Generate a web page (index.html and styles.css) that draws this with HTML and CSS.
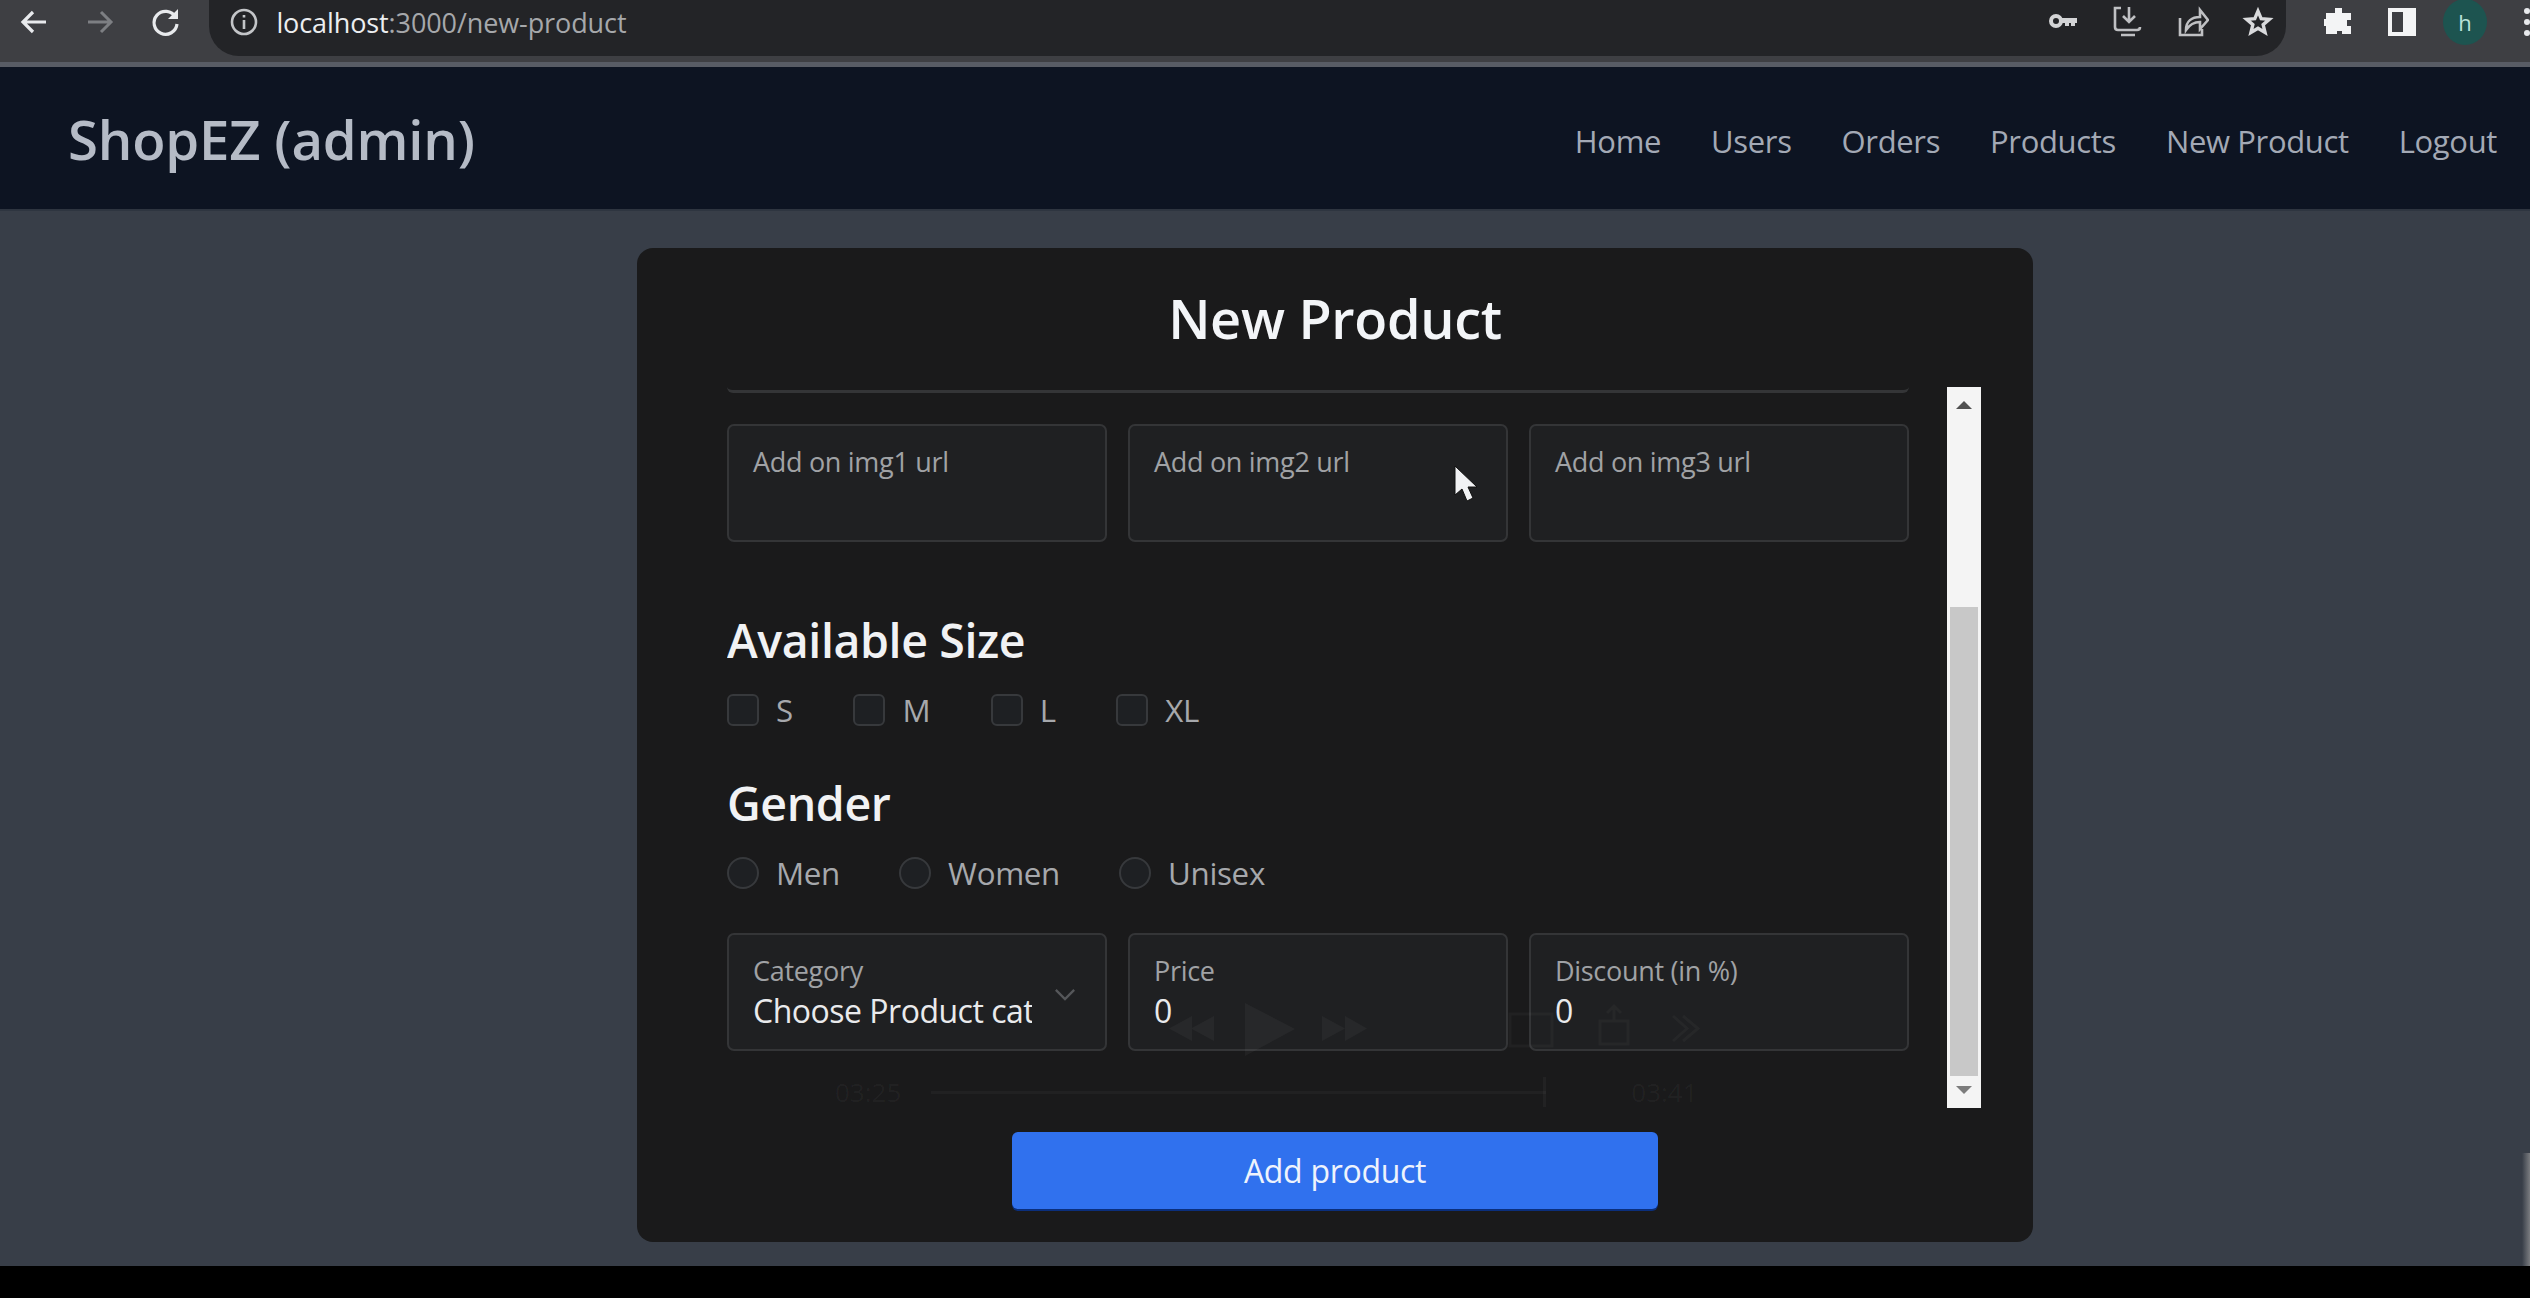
FILE: index.html
```html
<!DOCTYPE html>
<html lang="en">
<head>
<meta charset="utf-8">
<title>ShopEZ (admin)</title>
<link rel="stylesheet" href="styles.css">
</head>
<body>
<div class="screen">
  <header class="browser">
    <div class="browser-nav">
      <svg class="ico" viewBox="0 0 32 32"><path class="s-bright" d="M28 16H6M15 6 5 16l10 10"/></svg>
      <svg class="ico" viewBox="0 0 32 32"><path class="s-dim" d="M4 16h22M17 6l10 10-10 10"/></svg>
      <svg class="ico" viewBox="0 0 32 32"><path class="s-bright" d="M25.5 11A11.500 11.500 0 1 0 27 18"/><path class="f-bright" d="M18 13 28 13 28 3z"/></svg>
    </div>
    <div class="omnibox">
      <svg class="ico" viewBox="0 0 32 32"><circle class="s-thin" cx="16" cy="16" r="12"/><path class="s-thin" d="M16 14v9M16 9v2.500"/></svg>
      <div class="url"><span class="url-host">localhost</span>:3000/new-product</div>
      <div class="omni-actions">
        <svg class="ico" viewBox="0 0 32 32"><circle class="s-key" cx="9" cy="15" r="5"/><path class="f-mid" d="M14 12h16v5h-2v3h-4v-3h-2v3h-4v-3h-4z"/></svg>
        <svg class="ico" viewBox="0 0 32 32"><path class="s-mid" d="M9 2H3v19q0 3 3 3M17 1v13M11 10l6 6 6-6M6 24h19q3 0 3-3M9 29h14"/></svg>
        <svg class="ico" viewBox="0 0 32 32"><path class="s-mid" d="M3 12v17h22v-6M9 24c0-9 6-13 14-13V4l8 10-8 9v-7c-6 0-10 2-14 8z"/></svg>
        <svg class="ico" viewBox="-3 -3 38 38"><path class="s-star" d="m16 3 3.800 9 9.700.8-7.400 6.300 2.300 9.400L16 23.500l-8.400 5 2.300-9.400-7.400-6.300 9.700-.8z"/></svg>
      </div>
    </div>
    <div class="browser-ext">
      <svg class="ico" viewBox="0 0 32 32"><path class="f-white" d="M12 2h7v5h9v7h-4v6h4v8h-9v-3h-5v3H3v-8H1v-7h2V7h9z"/></svg>
      <svg class="ico" viewBox="0 0 32 32"><path class="f-white" fill-rule="evenodd" d="M2 2h28v28H2zM6 6v20h11V6z"/></svg>
      <div class="avatar">h</div>
      <div class="kebab"><i></i><i></i><i></i></div>
    </div>
  </header>

  <nav class="topnav">
    <div class="brand">ShopEZ (admin)</div>
    <ul class="links">
      <li>Home</li><li>Users</li><li>Orders</li><li>Products</li><li>New Product</li><li>Logout</li>
    </ul>
  </nav>

  <main class="page">
    <section class="card">
      <h1 class="card-title">New Product</h1>
      <div class="scroller">
        <form class="form">
          <div class="clipped-field"></div>
          <div class="row row-first">
            <div class="field"><span class="hint">Add on img1 url</span></div>
            <div class="field"><span class="hint">Add on img2 url</span></div>
            <div class="field"><span class="hint">Add on img3 url</span></div>
          </div>
          <h2 class="group-title group-size">Available Size</h2>
          <div class="options options-size">
            <label class="opt"><span class="box"></span>S</label>
            <label class="opt"><span class="box"></span>M</label>
            <label class="opt"><span class="box"></span>L</label>
            <label class="opt"><span class="box"></span>XL</label>
          </div>
          <h2 class="group-title group-gender">Gender</h2>
          <div class="options options-gender">
            <label class="opt"><span class="box round"></span>Men</label>
            <label class="opt"><span class="box round"></span>Women</label>
            <label class="opt"><span class="box round"></span>Unisex</label>
          </div>
          <div class="row row-last">
            <div class="field field-select">
              <span class="hint">Category</span>
              <span class="value value-clip">Choose Product category</span>
              <svg class="chev" viewBox="0 0 24 14"><path d="m2 2 10 10L22 2"/></svg>
            </div>
            <div class="field"><span class="hint">Price</span><span class="value">0</span></div>
            <div class="field"><span class="hint">Discount (in %)</span><span class="value">0</span></div>
          </div>
        </form>
        <div class="scrollbar">
          <svg class="arrow" viewBox="0 0 16 8"><path d="M8 0 16 8H0z"/></svg>
          <div class="track"><div class="thumb"></div></div>
          <svg class="arrow arrow-down" viewBox="0 0 16 8"><path d="M0 0h16L8 8z"/></svg>
        </div>
      </div>
      <button class="submit" type="button">Add product</button>

      <svg class="ghost-controls" viewBox="0 0 560 60">
        <path d="M32 15 9 27.500 32 40zM54 15 31 27.500 54 40z"/>
        <path d="M85 2 135 28 85 55z"/>
        <path d="M162 15l23 12.500L162 40zM185 15l22 12.500L185 40z"/>
        <path class="ghost-line" d="M350 13h42v32h-42zM440 20h28v23h-28zM454 20V6M447 12l7-7 7 7M513 15l14 12.500-14 12.500M523 15l15 12.500-15 12.500"/>
      </svg>
      <div class="ghost-time">
        <span>03:25</span><span class="ghost-bar"></span><span>03:41</span>
      </div>
    </section>
  </main>
  <div class="edge-shadow"></div>
  <div class="cursor">
    <svg viewBox="0 0 26 38"><path d="M2 1v29l7-6 5 12 6-3-5-11h9z"/></svg>
  </div>
  <div class="letterbox"></div>
</div>
</body>
</html>
```

FILE: styles.css
```css
* { box-sizing: border-box; }
html, body { margin: 0; height: 100%; background: #000; }
body { font-family: "Open Sans", "Noto Sans", sans-serif; overflow: hidden; }
.screen { position: relative; display: flex; flex-direction: column; height: 1298px; width: 2530px; overflow: hidden; }

/* Browser chrome */
.browser { display: flex; height: 67px; flex: none; background: #3e3f43; border-bottom: 5px solid #585c65; }
.ico { width: 32px; height: 32px; flex: none; fill: none; }
.s-bright { stroke: #e8eaed; stroke-width: 3.2; fill: none; }
.s-dim { stroke: #7d7f83; stroke-width: 3; fill: none; }
.f-bright { fill: #e8eaed; }
.s-thin { stroke: #c3c5c8; stroke-width: 2.6; fill: none; }
.s-key { stroke: #d3d4d6; stroke-width: 4; fill: none; }
.f-mid { fill: #d3d4d6; }
.s-mid { stroke: #bfc0c3; stroke-width: 2.6; fill: none; }
.s-star { stroke: #d9dadc; stroke-width: 4; fill: none; }
.f-white { fill: #f3f4f5; }
.browser-nav { display: flex; align-items: center; gap: 34px; width: 210px; padding: 0 0 18px 18px; }
.omnibox { display: flex; align-items: center; width: 2083px; height: 56px; padding: 0 0 12px 19px; background: #232427; border-radius: 0 0 30px 30px; }
.url { margin-left: 16px; font-family: "Open Sans", sans-serif; font-size: 27px; letter-spacing: -0.1px; color: #a6a8ab; }
.url-host { color: #eceef0; }
.omni-actions { display: flex; align-items: center; gap: 33px; margin-left: auto; padding-right: 12px; }
.browser-ext { display: flex; align-items: center; flex: 1; padding: 0 0 18px 37px; gap: 31px; }
.avatar { display: flex; align-items: center; justify-content: center; flex: none; width: 44px; height: 46px; margin-left: -6px; border-radius: 50%; background: #1d5450; color: #b9e3da; font-size: 22px; }
.kebab { display: flex; flex-direction: column; gap: 5px; margin-left: 6px; }
.kebab i { display: block; width: 6px; height: 6px; border-radius: 50%; background: #e8eaed; }

/* Site navigation */
.topnav { display: flex; align-items: center; justify-content: space-between; height: 144px; flex: none; padding: 0 33px 0 68px; background: #0d1422; border-bottom: 2px solid #2e3540; }
.brand { padding-top: 2px; font-size: 54.5px; font-weight: 600; letter-spacing: -0.2px; color: #b5bbc6; }
.links { display: flex; gap: 50px; margin: 0; padding: 6px 0 0; list-style: none; font-size: 31px; letter-spacing: -0.35px; color: #a3a9b5; }

/* Page */
.page { flex: none; height: 1055px; padding: 37px 0 0 637px; background: #383e48; }
.card { position: relative; display: flex; flex-direction: column; align-items: center; width: 1396px; height: 994px; padding-top: 42px; background: #1a1a1b; border-radius: 16px; }
.card-title { margin: 0; height: 97px; font-size: 54px; line-height: 56px; font-weight: 600; letter-spacing: -0.3px; color: #f3f5f8; }
.scroller { display: flex; align-self: stretch; height: 721px; margin: 0 51px 0 90px; overflow: hidden; }
.form { width: 1182px; flex: none; }
.clipped-field { height: 6px; border-bottom: 3px solid #343537; border-radius: 0 0 8px 8px; }
.row { display: grid; grid-template-columns: repeat(3, 1fr); column-gap: 21px; }
.row-first { margin-top: 31px; }
.row-last { margin-top: 40px; }
.field { position: relative; display: flex; flex-direction: column; height: 118px; padding: 18px 24px 0; background: #1f2022; border: 2px solid #343537; border-radius: 7px; }
.hint { font-size: 27px; line-height: 35px; letter-spacing: -0.3px; color: #a0a2a5; }
.value { margin-top: 2px; font-size: 32px; line-height: 42px; letter-spacing: -0.5px; color: #e9eaec; }
.value-clip { width: 279px; overflow: hidden; white-space: nowrap; }
.chev { position: absolute; right: 29px; top: 53px; width: 22px; height: 13px; }
.chev path { fill: none; stroke: #55575a; stroke-width: 2.500; }
.group-title { margin: 0; font-size: 46.5px; line-height: 60px; font-weight: 600; letter-spacing: -0.4px; color: #f1f2f4; }
.group-size { margin-top: 68px; }
.group-gender { margin-top: 43px; }
.options { display: flex; margin-top: 20px; font-size: 31.3px; line-height: 40px; letter-spacing: -0.3px; color: #a6a8ac; }
.options-size { gap: 60.5px; }
.options-gender { gap: 59px; margin-top: 20px; }
.opt { display: flex; align-items: center; gap: 17px; }
.box { display: block; width: 32px; height: 32px; background: #1e2023; border: 2px solid #37393c; border-radius: 6px; }
.box.round { border-radius: 50%; }

/* Faked classic scrollbar */
.scrollbar { display: flex; flex-direction: column; align-items: center; width: 34px; margin-left: 38px; background: #f4f4f4; }
.arrow { width: 18px; height: 8px; margin: 14px 0 0; fill: #505050; flex: none; }
.arrow-down { margin: 8px 0 14px; fill: #7c7c7c; }
.track { position: relative; flex: 1; width: 100%; padding-top: 198px; }
.thumb { height: 469px; margin: 0 3px; background: #c8c8c8; }

.submit { width: 646px; height: 77px; margin-top: 24px; border: 0; border-radius: 6px; background: #3071ee; color: #eef3fc; font-family: inherit; font-size: 32px; letter-spacing: -0.3px; box-shadow: 0 2px 0 #0b2f7d; }

/* Faint video-player overlay burnt into the recording */
.ghost-controls { position: absolute; left: 523px; top: 753px; width: 560px; height: 60px; fill: rgba(255,255,255,.04); pointer-events: none; }
.ghost-line { fill: none; stroke: rgba(255,255,255,.03); stroke-width: 3; }
.ghost-time { position: absolute; left: 198px; top: 829px; display: flex; align-items: center; gap: 30px; height: 30px; font-size: 26px; color: rgba(255,255,255,.04); pointer-events: none; }
.ghost-bar { position: relative; width: 615px; height: 3px; margin-right: 55px; background: rgba(255,255,255,.03); }
.ghost-bar::after { content: ""; position: absolute; right: 0; top: -14px; width: 3px; height: 30px; background: rgba(255,255,255,.04); }

.edge-shadow { position: absolute; right: 0; top: 1153px; width: 8px; height: 113px; background: linear-gradient(to right, rgba(120,122,126,0), #7a7c80); }
.cursor { position: absolute; left: 1453px; top: 465px; width: 26px; height: 38px; }
.cursor svg { display: block; width: 100%; height: 100%; fill: #f1f2f4; stroke: #111; stroke-width: 1; }
.letterbox { flex: 1; background: #000; }
```
